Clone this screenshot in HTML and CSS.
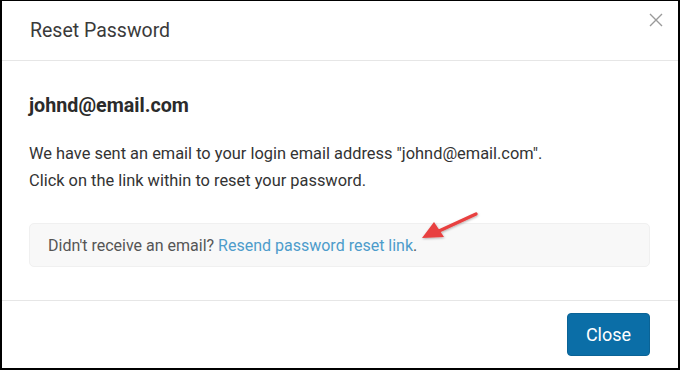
FILE: index.html
```html
<!DOCTYPE html>
<html>
<head>
<meta charset="utf-8">
<link rel="stylesheet" href="styles.css">
</head>
<body>
<div class="frame">
  <div class="modal-header">
    <h1 class="modal-title">Reset Password</h1>
    <span class="close-x" aria-label="Close">
      <svg width="14" height="14" viewBox="0 0 14 14"><path d="M1 1 L13 13 M13 1 L1 13" stroke="#9a9a9a" stroke-width="1.4" fill="none"/></svg>
    </span>
  </div>
  <div class="modal-body">
    <div class="email">johnd@email.com</div>
    <p class="message">We have sent an email to your login email address "johnd@email.com".<br>Click on the link within to reset your password.</p>
    <div class="notice">Didn't receive an email? <a class="link" href="#">Resend password reset link</a>.</div>
    <svg class="arrow" width="70" height="40" viewBox="0 0 70 40">
      <defs>
        <filter id="sh" x="-20%" y="-20%" width="140%" height="140%">
          <feDropShadow dx="0.5" dy="1" stdDeviation="0.8" flood-color="#000" flood-opacity="0.3"/>
        </filter>
      </defs>
      <g filter="url(#sh)">
        <path d="M59 6 L22 23" stroke="#e8403f" stroke-width="3.4" stroke-linecap="round" fill="none"/>
        <path d="M5 30 L17 14 L27 29 Z" fill="#e8403f"/>
      </g>
    </svg>
  </div>
  <div class="modal-footer">
    <button class="btn-close">Close</button>
  </div>
</div>
</body>
</html>
```
FILE: styles.css
```css
html, body {
  margin: 0;
  padding: 0;
  background: #fff;
}
.frame {
  width: 680px;
  height: 370px;
  box-sizing: border-box;
  border-style: solid;
  border-color: #000;
  border-width: 1px 2px 2px 2px;
  display: flex;
  flex-direction: column;
  font-family: Roboto, "Liberation Sans", sans-serif;
  color: #333;
  background: #fff;
}
.modal-header {
  height: 59px;
  border-bottom: 1px solid #e6e6e6;
  display: flex;
  align-items: center;
  justify-content: space-between;
  padding: 0 15px 0 28px;
}
.modal-title {
  margin: 0;
  font-size: 19.5px;
  font-weight: 400;
  color: #3a3a3a;
  line-height: 24px;
  margin-top: 1px;
}
.close-x {
  align-self: flex-start;
  margin-top: 12px;
  width: 14px;
  height: 14px;
  display: block;
}
.close-x svg { display: block; }
.modal-body {
  flex: 1;
  padding: 33px 28px 0 27px;
  position: relative;
}
.email {
  font-size: 19.7px;
  font-weight: 700;
  line-height: 24px;
  color: #2b2b2b;
}
.message {
  margin: 22px 0 0 0;
  font-size: 16.4px;
  line-height: 27px;
  color: #333;
}
.notice {
  margin-top: 29px;
  height: 42px;
  background: #f8f8f8;
  border: 1px solid #f0f0f0;
  border-radius: 5px;
  padding: 0 18px;
  display: flex;
  align-items: center;
  font-size: 16px;
  color: #555;
  white-space: pre;
}
.link {
  color: #4d9ccb;
  text-decoration: none;
}
.arrow {
  position: absolute;
  left: 415px;
  top: 147px;
}
.modal-footer {
  height: 68px;
  border-top: 1px solid #e6e6e6;
  display: flex;
  justify-content: flex-end;
  align-items: flex-start;
  padding: 12px 28px 0 0;
  box-sizing: border-box;
}
.btn-close {
  width: 83px;
  height: 43px;
  background: #0b6ea7;
  color: #fff;
  border: 1px solid #0a6396;
  border-radius: 4px;
  font-family: Roboto, "Liberation Sans", sans-serif;
  font-size: 18px;
  padding: 0;
  cursor: pointer;
}
```
